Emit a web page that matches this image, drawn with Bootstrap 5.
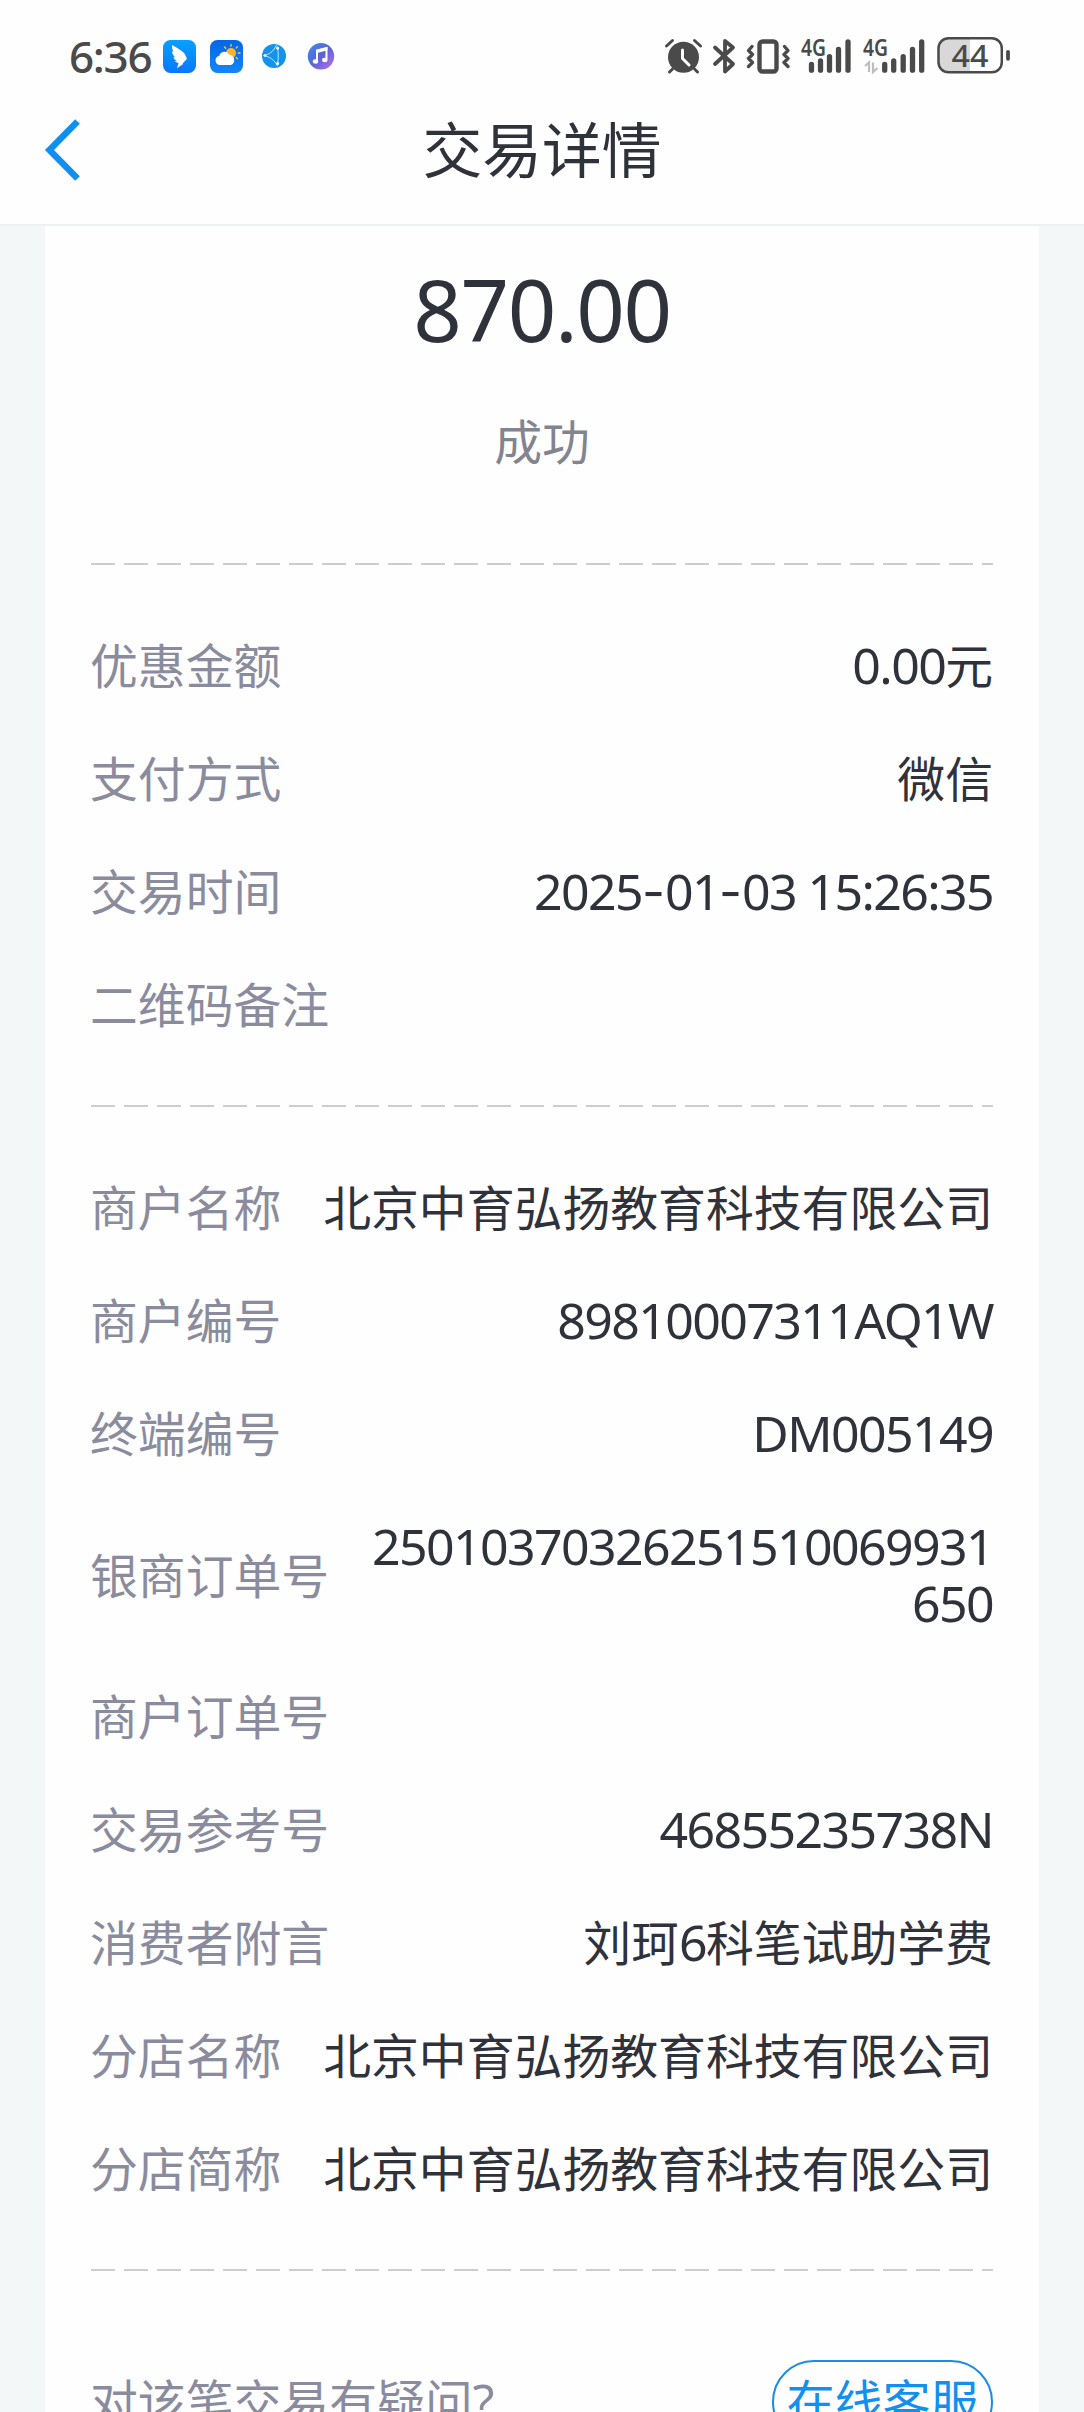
<!DOCTYPE html>
<html lang="zh-CN">
<head>
<meta charset="utf-8">
<meta name="viewport" content="width=device-width, initial-scale=1">
<title>交易详情</title>
<link href="https://cdn.jsdelivr.net/npm/bootstrap@5.3.0/dist/css/bootstrap.min.css" rel="stylesheet">
<style>
  html, body { height: 2412px; overflow: hidden; }
  body { background: #f3f7f8; color: #2f323b; font-family: "Noto Sans CJK SC", sans-serif; font-size: 47.85px; line-height: 57px; }
  .top-area { height: 226px; background: #fefefe; border-bottom: 2px solid #eef1f1; }
  .status-bar { height: 75px; padding: 37px 74px 0 69px; color: #4a4a4a; }
  .clock { font: 500 44px/38px "Noto Sans", sans-serif; letter-spacing: -1.3px; width: 94px; }
  .title-bar { height: 150px; padding: 0 45px; display: grid; grid-template-columns: 1fr auto 1fr; }
  .page-title { font-size: 59.8px; line-height: 80px; font-weight: 400; margin: 0 0 7px; }
  .receipt { margin: 0 45px; padding: 0 46px; background: #fefefe; height: 2186px; }
  .amount { font: 400 85px/120px "Noto Sans", sans-serif; letter-spacing: -1.4px; padding-top: 23px; }
  .state { margin-top: 42px; padding-bottom: 95px; color: #82848f; }
  .dash { height: 2px; background: repeating-linear-gradient(90deg, #cdcdcd 0 24px, transparent 24px 33px); }
  .rows { padding: 70px 0 74px; gap: 56px; }
  .item { gap: 36px; }
  .key { color: #8a8c9e; white-space: nowrap; margin-left: -1px; }
  .val { word-break: break-all; }
  .lat { font-family: "Noto Sans", sans-serif; font-size: 50px; line-height: 0; letter-spacing: -1.6px; }
  .hy { font-family: Inter, sans-serif; letter-spacing: 0; }
  .foot { padding-top: 89px; }
  .foot .key { margin-bottom: 5px; }
  .service { width: 221px; height: 84px; border: 2px solid #1a8be6; color: #1290f0; font-size: 48px; line-height: 57px; padding: 0 0 5px; }
  .service:hover { color: #1290f0; }
  svg { display: block; flex: none; overflow: visible; }
  svg text { font-family: "Noto Sans", sans-serif; }
</style>
</head>
<body>
<header class="top-area">
  <div class="status-bar d-flex justify-content-between">
    <div class="d-flex">
      <div class="clock">6:36</div>
      <svg width="172" height="38" viewBox="163 37 172 38">
        <defs>
          <linearGradient id="ga" x1="0" y1="0" x2="0" y2="1"><stop offset="0" stop-color="#08a0ff"/><stop offset="1" stop-color="#0878fa"/></linearGradient>
          <linearGradient id="gb" x1="0" y1="0" x2="0" y2="1"><stop offset="0" stop-color="#0566e6"/><stop offset="1" stop-color="#1286fb"/></linearGradient>
          <linearGradient id="gc" x1="0" y1="0" x2="1" y2="1"><stop offset="0" stop-color="#3d8df0"/><stop offset=".5" stop-color="#5a63d2"/><stop offset="1" stop-color="#c070f0"/></linearGradient>
        </defs>
        <rect x="163" y="40" width="33" height="33" rx="7.5" fill="url(#ga)"/>
        <path d="M172 45c4 2.500 9 4.500 12 8 1.500 2 2.600 4 2.800 6l-4.200 4.500.6.600-6.200 4.200 1.600-5.300c-1.600-.3-3-.8-3.900-1.700l2.200-.4c-2-1-3.200-2.500-3.500-4l1.800.4c-2.200-2-3.400-4-3.100-6l1.500.9c-1-2.200-1.900-4.600-1.600-7.200z" fill="#fff"/>
        <rect x="210" y="40" width="33" height="33" rx="7.500" fill="url(#gb)"/>
        <g stroke="#ffc33c" stroke-width="1.300" stroke-linecap="round"><path d="M231 44.500v1.800M224.500 47l1.200 1.300M237.500 46.600l-1.300 1.400M238.200 53h1.800M236.200 57.500l1.300 1.200"/></g>
        <circle cx="231" cy="53" r="5" fill="#fdb52b"/>
        <path d="M220 65a4.600 4.600 0 0 1-.8-9.100 5.600 5.600 0 0 1 10.300-1.200 5.400 5.400 0 0 1 1.500 10.300z" fill="#fff"/>
        <circle cx="274" cy="56" r="12" fill="#1592ea"/>
        <g fill="none" stroke="#bfe9ff" stroke-width="1"><path d="M263.500 55.500c6-1 10-4 13-10.500M263.500 55.500c6 1 11 4.500 14 10.500M277.500 47c1 6 1 12 0 17"/></g>
        <circle cx="265" cy="55.500" r="1.300" fill="#fff"/><circle cx="277.600" cy="48" r="1.500" fill="#fff"/><circle cx="277.600" cy="63.500" r="1.500" fill="#fff"/>
        <circle cx="321" cy="56.300" r="13.200" fill="url(#gc)"/>
        <path d="M317 61V50.500l9.500-2.500v11.500" fill="none" stroke="#fff" stroke-width="2"/><path d="M316 50l11.500-3v3.200l-11.500 3z" fill="#fff"/>
        <ellipse cx="315.500" cy="61.500" rx="2.700" ry="2.200" fill="#fff"/><ellipse cx="324.800" cy="60" rx="2.700" ry="2.200" fill="#fff"/>
      </svg>
    </div>
    <svg width="346" height="38" viewBox="664 37 346 38" fill="none" stroke="#4a4a4a" stroke-linecap="round">
      <!-- alarm -->
      <circle cx="683.500" cy="57.300" r="15.500" fill="#4a4a4a" stroke="none"/>
      <path d="M666.500 46l6-5.500M700.500 46l-6-5.500M672.500 69l-3 3M694.500 69l3 3" stroke-width="3"/>
      <path d="M682.500 50v8.500l6.500 6.500" stroke="#fff" stroke-width="3"/>
      <!-- bluetooth -->
      <path d="M715 47.500l18 16.500-8 7.500V41l8 6.500-18 16.500" stroke-width="3.800" stroke-linejoin="round"/>
      <!-- vibrate -->
      <rect x="759.500" y="41.500" width="17" height="30" rx="3" stroke-width="4.400"/>
      <path d="M752 46l-3.500 4 4 4-4 4 4 4-4 4M784.500 46l3.500 4-4 4 4 4-4 4 4 4" transform="translate(0 .5)" stroke-width="3.300" stroke-linejoin="round"/>
      <!-- signals -->
      <g stroke-width="5.300">
        <path d="M811.500 64.500v5.700M820.500 61v9.200M829.500 56.700v13.500M838.500 49.500v20.700M848 41.800v28.400"/>
        <path d="M884.700 64.500v5.700M893.700 61v9.200M903.200 56.700v13.500M912.500 49.500v20.700M921.700 41.800v28.400"/>
      </g>
      <g fill="#4a4a4a" stroke="none" font-size="23" font-weight="600">
        <text x="801" y="55.500" textLength="25" lengthAdjust="spacingAndGlyphs">4G</text>
        <text x="863" y="55.500" textLength="25" lengthAdjust="spacingAndGlyphs">4G</text>
      </g>
      <path d="M865 66l4-3.500V72M873 62.500V72l4.500-4" stroke="#bdbdbd" stroke-width="2.200" stroke-linecap="butt"/>
      <!-- battery -->
      <path d="M970 38.500h-22a9.500 9.500 0 0 0-9.500 9.500v14.500a9.500 9.500 0 0 0 9.500 9.500h22z" fill="#d8d8d8" stroke="none"/>
      <rect x="938.500" y="38.300" width="63.300" height="34" rx="10" stroke-width="2.500"/>
      <path d="M1008 51.800v7" stroke-width="3.800"/>
      <text x="951.500" y="66.500" fill="#4a4a4a" stroke="none" font-size="31" font-weight="500" textLength="37" lengthAdjust="spacingAndGlyphs">44</text>
    </svg>
  </div>
  <nav class="title-bar align-items-center">
    <svg width="36" height="62" viewBox="0 0 36 62" fill="none" stroke="#0f8ff0" stroke-width="6.500"><path d="M32.500 2.500L4.500 31l28 28.500"/></svg>
    <h1 class="page-title">交易详情</h1>
  </nav>
</header>

<main class="receipt">
  <div class="amount text-center">870.00</div>
  <div class="state text-center">成功</div>
  <div class="dash"></div>
  <section class="rows d-flex flex-column">
    <div class="item d-flex justify-content-between align-items-center"><span class="key">优惠金额</span><span class="val text-end"><span class="lat">0.00</span>元</span></div>
    <div class="item d-flex justify-content-between align-items-center"><span class="key">支付方式</span><span class="val text-end">微信</span></div>
    <div class="item d-flex justify-content-between align-items-center"><span class="key">交易时间</span><span class="val text-end text-nowrap"><span class="lat">2025<span class="hy">-</span>01<span class="hy">-</span>03 15:26:35</span></span></div>
    <div class="item d-flex justify-content-between align-items-center"><span class="key">二维码备注</span></div>
  </section>
  <div class="dash"></div>
  <section class="rows d-flex flex-column">
    <div class="item d-flex justify-content-between align-items-center"><span class="key">商户名称</span><span class="val text-end">北京中育弘扬教育科技有限公司</span></div>
    <div class="item d-flex justify-content-between align-items-center"><span class="key">商户编号</span><span class="val text-end"><span class="lat">89810007311AQ1W</span></span></div>
    <div class="item d-flex justify-content-between align-items-center"><span class="key">终端编号</span><span class="val text-end"><span class="lat">DM005149</span></span></div>
    <div class="item d-flex justify-content-between align-items-center"><span class="key">银商订单号</span><span class="val text-end"><span class="lat">25010370326251510069931650</span></span></div>
    <div class="item d-flex justify-content-between align-items-center"><span class="key">商户订单号</span></div>
    <div class="item d-flex justify-content-between align-items-center"><span class="key">交易参考号</span><span class="val text-end"><span class="lat">46855235738N</span></span></div>
    <div class="item d-flex justify-content-between align-items-center"><span class="key">消费者附言</span><span class="val text-end">刘珂<span class="lat">6</span>科笔试助学费</span></div>
    <div class="item d-flex justify-content-between align-items-center"><span class="key">分店名称</span><span class="val text-end">北京中育弘扬教育科技有限公司</span></div>
    <div class="item d-flex justify-content-between align-items-center"><span class="key">分店简称</span><span class="val text-end">北京中育弘扬教育科技有限公司</span></div>
  </section>
  <div class="dash"></div>
  <div class="foot d-flex justify-content-between align-items-center">
    <span class="key">对该笔交易有疑问<span class="lat">?</span></span>
    <button type="button" class="btn service rounded-pill">在线客服</button>
  </div>
</main>
<script src="https://cdn.jsdelivr.net/npm/bootstrap@5.3.0/dist/js/bootstrap.bundle.min.js"></script>
</body>
</html>
